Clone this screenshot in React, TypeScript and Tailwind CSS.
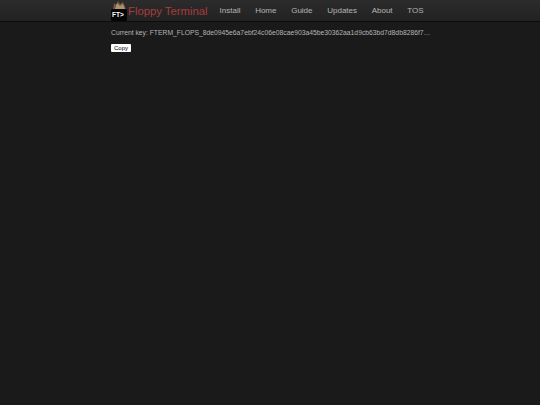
export default function App() {
  const links = ['Install', 'Home', 'Guide', 'Updates', 'About', 'TOS']

  return (
    <div className="min-h-[405px] bg-[#1a1a1a] font-['Liberation_Sans',Arial,sans-serif]">
      {/* Navbar */}
      <nav className="h-[22px] bg-gradient-to-b from-[#2c2c2c] to-[#222222] border-b border-[#0c0c0c] pl-[111px] flex items-center">
        <div className="relative w-4 h-[21px] shrink-0">
          <svg width="16" height="21" viewBox="0 0 16 21">
            <path d="M2 9 L3 3 L5 5 L7 1 L9 4 L12 2 L15 9 Z" fill="#6f5443" />
            <path d="M4 9 L6 3 L9 6 L12 4 L14 9 Z" fill="#b0906f" />
            <rect x="0" y="9" width="16" height="12" rx="1.5" fill="#050505" />
          </svg>
          <span className="absolute left-[1px] top-[10px] text-[6.5px] leading-[9px] font-bold text-white">FT&gt;</span>
        </div>
        <span className="text-[11.3px] leading-[22px] text-[#a83c3c] ml-px">Floppy Terminal</span>
        <ul className="flex ml-[12px] gap-[14.7px]">
          {links.map((link) => (
            <li key={link} className="text-[8px] leading-[22px] text-[#b5b5b5]">{link}</li>
          ))}
        </ul>
      </nav>

      <main className="pl-[111px] pt-[6px]">
        <p className="text-[6.77px] leading-[10px] text-[#b4b4b4] whitespace-nowrap">
          Current key: FTERM_FLOPS_8de0945e6a7ebf24c06e08cae903a45be30362aa1d9cb63bd7d8db8286f7…
        </p>
        <button className="block mt-[6px] h-[8px] w-[20px] bg-white rounded-[1px] text-[6px] leading-[8px] text-black text-center">
          Copy
        </button>
      </main>
    </div>
  )
}
